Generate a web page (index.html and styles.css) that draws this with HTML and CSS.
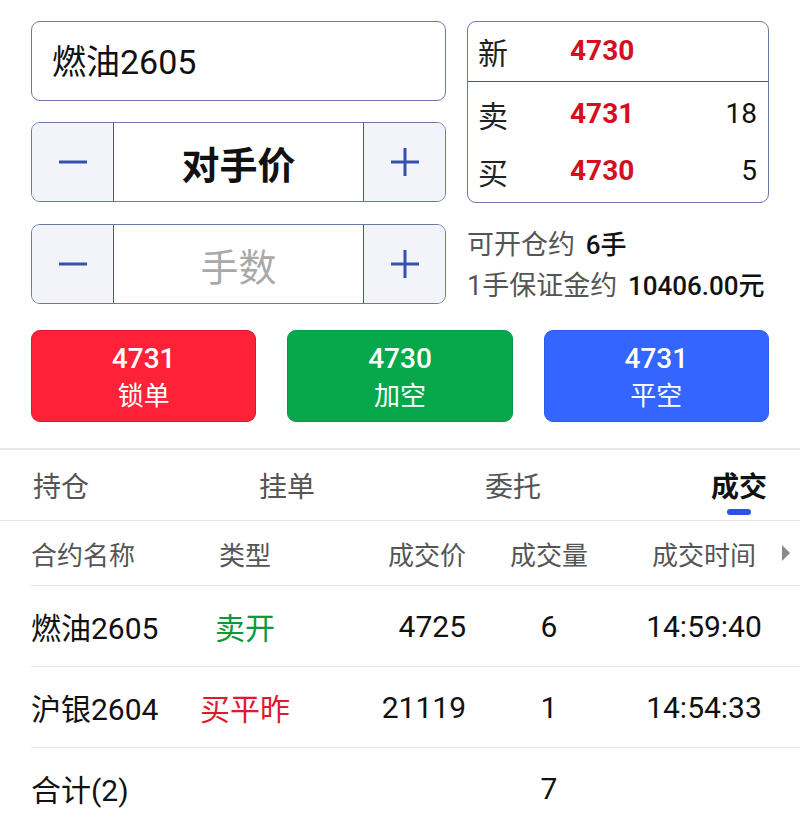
FILE: index.html
```html
<!DOCTYPE html>
<html>

<head>
    <meta charset="UTF-8">
    <meta name="viewport" content="width=device-width, initial-scale=1.0, user-scalable=no">
    <title>交易</title>
    <link rel="stylesheet" href="styles.css">
</head>

<body>
    <section class="order_panel">
        <div class="order_left">
            <div class="contract_input">燃油2605</div>
            <div class="stepper">
                <div class="stepper_btn">
                    <svg width="30" height="30" viewBox="0 0 30 30"><path d="M1 15H29" /></svg>
                </div>
                <div class="stepper_value stepper_value_bold">对手价</div>
                <div class="stepper_btn">
                    <svg width="30" height="30" viewBox="0 0 30 30"><path d="M1 15H29M15 1V29" /></svg>
                </div>
            </div>
            <div class="stepper">
                <div class="stepper_btn">
                    <svg width="30" height="30" viewBox="0 0 30 30"><path d="M1 15H29" /></svg>
                </div>
                <div class="stepper_value stepper_placeholder">手数</div>
                <div class="stepper_btn">
                    <svg width="30" height="30" viewBox="0 0 30 30"><path d="M1 15H29M15 1V29" /></svg>
                </div>
            </div>
        </div>
        <div class="order_right">
            <div class="quote">
                <div class="quote_top">
                    <span class="quote_label">新</span>
                    <span class="quote_price">4730</span>
                </div>
                <div class="quote_book">
                    <div class="quote_row">
                        <span class="quote_label">卖</span>
                        <span class="quote_price">4731</span>
                        <span class="quote_qty">18</span>
                    </div>
                    <div class="quote_row">
                        <span class="quote_label">买</span>
                        <span class="quote_price">4730</span>
                        <span class="quote_qty">5</span>
                    </div>
                </div>
            </div>
            <div class="info">
                <p>可开仓约 <b>6手</b></p>
                <p>1手保证金约 <b>10406.00元</b></p>
            </div>
        </div>
    </section>

    <section class="actions">
        <div class="action action_red">
            <span class="action_price">4731</span>
            <span class="action_name">锁单</span>
        </div>
        <div class="action action_green">
            <span class="action_price">4730</span>
            <span class="action_name">加空</span>
        </div>
        <div class="action action_blue">
            <span class="action_price">4731</span>
            <span class="action_name">平空</span>
        </div>
    </section>

    <nav class="tabs">
        <span class="tab">持仓</span>
        <span class="tab">挂单</span>
        <span class="tab">委托</span>
        <span class="tab tab_active">成交</span>
    </nav>

    <section class="trades">
        <div class="trade_row trade_head">
            <span>合约名称</span>
            <span class="col_center">类型</span>
            <span class="col_right">成交价</span>
            <span class="col_center">成交量</span>
            <span class="col_center">成交时间</span>
            <span class="more"></span>
        </div>
        <div class="trade_row">
            <span>燃油2605</span>
            <span class="col_center green">卖开</span>
            <span class="col_right">4725</span>
            <span class="col_center">6</span>
            <span class="col_center">14:59:40</span>
        </div>
        <div class="trade_row">
            <span>沪银2604</span>
            <span class="col_center red">买平昨</span>
            <span class="col_right">21119</span>
            <span class="col_center">1</span>
            <span class="col_center">14:54:33</span>
        </div>
        <div class="trade_row trade_total">
            <span>合计(2)</span>
            <span></span>
            <span></span>
            <span class="col_center">7</span>
            <span></span>
        </div>
    </section>
</body>

</html>
```

FILE: styles.css
```css
html,
body {
    margin: 0;
    padding: 0;
    width: 100%;
    background: #ffffff;
    color: #111111;
    font-family: Roboto, "Noto Sans CJK SC", sans-serif;
    -webkit-font-smoothing: antialiased;
    overflow: hidden;
}

p {
    margin: 0;
}

.order_panel {
    display: grid;
    grid-template-columns: 415px 302px;
    column-gap: 21px;
    padding: 21px 31px 0;
}

.order_left {
    display: flex;
    flex-direction: column;
    gap: 21px;
}

.contract_input {
    height: 80px;
    box-sizing: border-box;
    border: 1px solid #6b79a6;
    border-radius: 9px;
    display: flex;
    align-items: center;
    padding: 0 0 4px 20px;
    font-size: 34px;
    color: #111111;
}

.stepper {
    height: 78px;
    border: 1px solid #6b79a6;
    border-radius: 9px;
    display: flex;
    overflow: hidden;
}

.stepper + .stepper {
    margin-top: 1px;
}

.stepper_btn {
    width: 81px;
    background: #f2f4fa;
    display: flex;
    justify-content: center;
    align-items: center;
}

.stepper_btn svg path {
    stroke: #3550ad;
    stroke-width: 3;
    fill: none;
}

.stepper_value {
    flex: 1;
    border-left: 1px solid #4a5787;
    border-right: 1px solid #4a5787;
    display: flex;
    justify-content: center;
    align-items: center;
    font-size: 38px;
}

.stepper_value_bold {
    font-weight: bold;
}

.stepper_placeholder {
    color: #a9a9a9;
}

.quote {
    height: 180px;
    border: 1px solid #6b79a6;
    border-radius: 9px;
    display: flex;
    flex-direction: column;
}

.quote_top {
    height: 60px;
    border-bottom: 1px solid #4a5787;
    display: flex;
    align-items: center;
    padding: 0 11px 2px 10px;
    box-sizing: border-box;
}

.quote_book {
    flex: 1;
    display: flex;
    flex-direction: column;
    padding: 3px 11px 3px 10px;
}

.quote_row {
    flex: 1;
    display: flex;
    align-items: center;
}

.quote_label {
    width: 92px;
    font-size: 30px;
    color: #222222;
}

.quote_price {
    font-size: 28px;
    font-weight: bold;
    color: #d40f1f;
}

.quote_qty {
    margin-left: auto;
    font-size: 28px;
    color: #111111;
}

.info {
    margin-top: 22px;
    height: 79px;
    font-size: 27px;
    line-height: 41px;
    color: #555555;
}

.info b {
    font-weight: 500;
    font-size: 26px;
    color: #111111;
    margin-left: 4px;
}

.actions {
    display: grid;
    grid-template-columns: 1fr 1fr 1fr;
    column-gap: 31px;
    padding: 26px 31px 0;
}

.action {
    height: 92px;
    border-radius: 9px;
    color: #ffffff;
    display: flex;
    flex-direction: column;
    justify-content: center;
    align-items: center;
    box-sizing: border-box;
    padding-top: 3px;
}

.action_price {
    font-size: 28px;
    font-weight: 500;
    line-height: 36px;
}

.action_name {
    font-size: 26px;
    line-height: 38px;
}

.action_red {
    background: #ff2137;
    border: 1px solid #dc1830;
}

.action_green {
    background: #06a84b;
    border: 1px solid #05964a;
}

.action_blue {
    background: #3466ff;
    border: 1px solid #2f5ae6;
}

.tabs {
    margin-top: 26px;
    border-top: 2px solid #e8e8e8;
    border-bottom: 1px solid #e6e6e6;
    height: 70px;
    padding: 0 33px;
    display: flex;
    justify-content: space-between;
    align-items: center;
}

.tab {
    font-size: 28px;
    line-height: 40px;
    margin-top: 5px;
    color: #555555;
    position: relative;
}

.tab_active {
    font-weight: bold;
    color: #111111;
}

.tab_active::after {
    content: "";
    position: absolute;
    left: 16px;
    top: 41px;
    width: 24px;
    height: 6px;
    border-radius: 3px;
    background: #2b52e6;
}

.trades {
    margin-left: 31px;
}

.trade_row {
    display: grid;
    grid-template-columns: 156px 116px 163px 166px 144px 24px;
    align-items: center;
    height: 80px;
    border-bottom: 1px solid #e6e6e6;
    font-size: 30px;
    color: #111111;
}

.trade_head {
    height: 64px;
    font-size: 26px;
    color: #555555;
}

.trade_total {
    border-bottom: none;
}

.col_center {
    text-align: center;
}

.col_right {
    text-align: right;
}

.green {
    color: #0a9a3c;
}

.red {
    color: #e01a2e;
}

.more {
    justify-self: end;
    margin-right: 10px;
    width: 0;
    height: 0;
    border-top: 8px solid transparent;
    border-bottom: 8px solid transparent;
    border-left: 8px solid #8a8a8a;
}
```
